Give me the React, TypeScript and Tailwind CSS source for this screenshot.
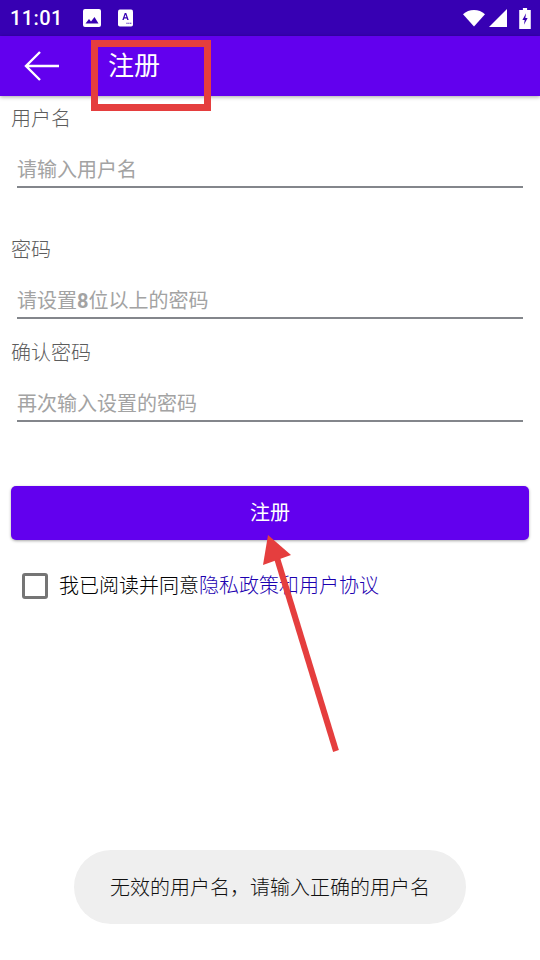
import React from 'react';

const cjk = "font-['Roboto','Noto_Sans_CJK_SC',sans-serif]";

function Field({ label, children, className }: { label: string; children: React.ReactNode; className: string }) {
  return (
    <div className={className}>
      <div className="pl-[11px] text-[20px] font-light leading-[28px] text-[#5c5c5c]">{label}</div>
      <div className="mx-[17px] mt-[23px] h-[32px] border-b-2 border-[#83868b] text-[20px] leading-[28px] text-[#a3a3a3]">
        {children}
      </div>
    </div>
  );
}

export default function App() {
  return (
    <div className={`relative h-[960px] w-[540px] overflow-hidden bg-white ${cjk}`}>
      {/* status bar */}
      <div className="flex h-[36px] items-center bg-[#3700b3] pl-[10px] pr-[9px] text-white">
        <span className="text-[20px] font-medium leading-none tracking-[0.4px]">11:01</span>
        <svg className="ml-[20px]" width="18" height="18" viewBox="0 0 18 18">
          <path fill="#fff" fillRule="evenodd" d="M2 0h14a2 2 0 0 1 2 2v14a2 2 0 0 1-2 2H2a2 2 0 0 1-2-2V2a2 2 0 0 1 2-2Zm.5 14.5h13L11.500 8 8 12.500 6 10Z" />
        </svg>
        <svg className="ml-[17px]" width="15" height="18" viewBox="0 0 16 18">
          <rect width="16" height="18" rx="2" fill="#fff" />
          <path fill="#3700b3" d="M4.600 11 7.200 3.600h1.600L11.400 11H9.900l-.5-1.600H6.600L6.100 11Zm2.400-2.800h2L8 5.200ZM9 14h1.200v1.200H9Zm2 0h1.200v1.200H11Zm2 0h1.200v1.200H13Z" />
        </svg>
        <div className="ml-auto flex items-center">
          <svg width="22" height="18" viewBox="0 0 22 18">
            <path fill="#fff" d="M0 5.200C3 2.600 6.800 1 11 1s8 1.600 11 4.200L11 17.500Z" />
          </svg>
          <svg className="ml-[4px]" width="18" height="18" viewBox="0 0 18 18">
            <path fill="#fff" d="M18 0v18H0Z" />
          </svg>
          <svg className="ml-[12px]" width="12" height="21" viewBox="0 0 11 20">
            <path fill="#fff" fillRule="evenodd" d="M3.500 0h4v2H11v18H0V2h3.500ZM6.500 5 3 11.500h2.200L4.500 16 8 9.500H5.800Z" />
          </svg>
        </div>
      </div>

      {/* app bar */}
      <div className="relative z-10 flex h-[60px] items-center bg-[#6200ee] pl-[24px] text-white shadow-[0_1px_4px_rgba(0,0,0,0.35)]">
        <svg width="35" height="30" viewBox="0 0 35 30" fill="none" stroke="#fff" strokeWidth="2.400">
          <path d="M35 15H2M16 1 2 15l14 14" />
        </svg>
        <span className="ml-[49px] text-[26px] leading-none">注册</span>
      </div>

      {/* form */}
      <Field label="用户名" className="pt-[9px]">
        请输入用户名
      </Field>
      <Field label="密码" className="pt-[48px]">
        请设置<span className="font-bold">8</span>位以上的密码
      </Field>
      <Field label="确认密码" className="pt-[20px]">
        再次输入设置的密码
      </Field>

      <button className="mx-[11px] mt-[64px] flex h-[54px] w-[518px] items-center justify-center rounded-[5px] bg-[#6200ee] text-[20px] text-white shadow-[0_1px_3px_rgba(0,0,0,0.35)]">
        注册
      </button>

      <div className="mt-[32px] flex items-center pl-[22px] text-[20px] font-light leading-[28px]">
        <span className="h-[26px] w-[26px] rounded-[3px] border-[3px] border-[#757575]" />
        <span className="ml-[11px] text-black">我已阅读并同意</span>
        <span className="text-[#1c00b0]">隐私政策和用户协议</span>
      </div>

      {/* toast */}
      <div className="absolute left-[74px] top-[850px] flex h-[74px] w-[392px] items-center justify-center rounded-[37px] bg-[#efefef] pt-[2px] text-[20px] font-light text-[#111]">
        无效的用户名，请输入正确的用户名
      </div>

      {/* red annotations */}
      <div className="pointer-events-none absolute left-[91px] top-[40px] z-20 h-[71px] w-[120px] border-[7px] border-[#e53e3e]" />
      <svg className="pointer-events-none absolute left-0 top-0 z-20" width="540" height="960" viewBox="0 0 540 960">
        <path d="M336 751 277 558" stroke="#e53e3e" strokeWidth="6" fill="none" />
        <path d="M268 535 291 555 263 565Z" fill="#e53e3e" />
      </svg>
    </div>
  );
}
